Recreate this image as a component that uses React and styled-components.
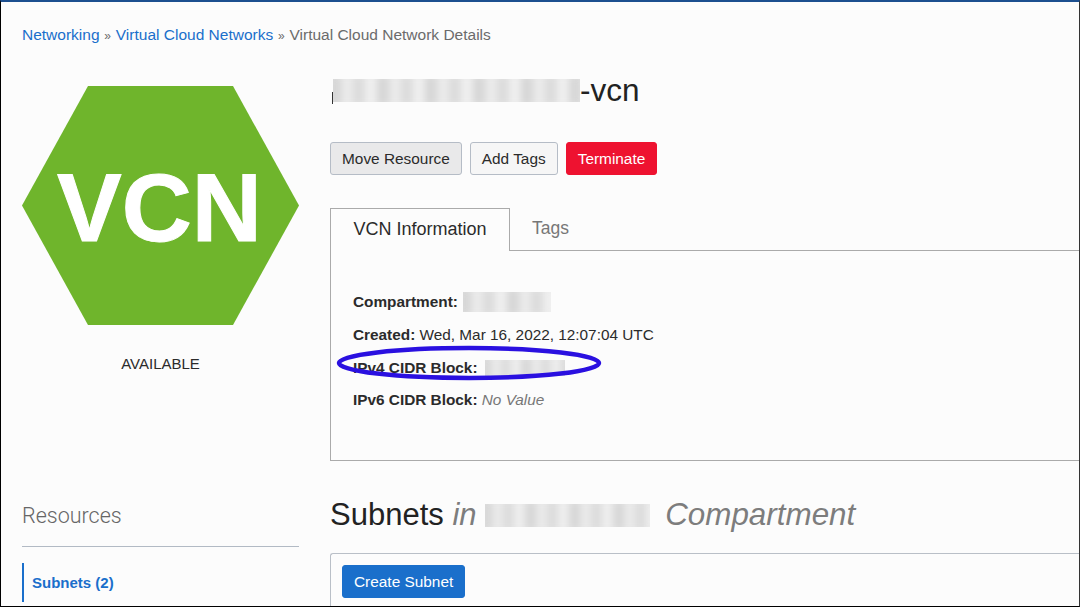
import React from "react";
import styled, { createGlobalStyle } from "styled-components";

const Global = createGlobalStyle`
  html, body { margin: 0; padding: 0; background: #000; }
  body { font-family: "Liberation Sans", Arial, sans-serif; }
`;
const Frame = styled.div`
  width: 1080px; height: 607px; box-sizing: border-box; overflow: hidden;
  background: #fcfcfc; border: 1px solid #000; border-top: 2px solid #1c4f8f;
  border-right-color: #333;
`;
const Page = styled.div`padding: 23px 0 0 21px; color: #2b2b2b;`;
const Crumbs = styled.nav`font-size: 15.5px; line-height: 20px; color: #6b6b6b; margin-bottom: 26px;`;
const Crumb = styled.a`color: #1a6fcb; text-decoration: none;`;
const Sep = styled.span`font-size: 12px; margin: 0 4.8px;`;
const Columns = styled.div`display: flex; align-items: flex-start;`;
const Side = styled.aside`width: 277px; margin-right: 31px; flex: none;`;
const Logo = styled.svg`display: block; width: 277px; height: 240px; margin-top: 14px;`;
const Status = styled.div`text-align: center; font-size: 15px; line-height: 18px; margin-top: 29px; color: #2b2b2b;`;
const ResTitle = styled.h3`
  margin: 131px 0 0; padding-bottom: 18px; border-bottom: 1px solid #b2bac4;
  font-family: Roboto, "Liberation Sans", sans-serif;
  font-size: 21.5px; line-height: 24px; font-weight: 300; color: #666;
`;
const ResItem = styled.div`
  margin-top: 16px; border-left: 2px solid #1a6fcb; padding-left: 8px; height: 39px;
  font-size: 15px; font-weight: 700; line-height: 39px; color: #1a6fcb;
`;
const Main = styled.main`flex: 1; min-width: 0;`;
const Title = styled.h1`
  margin: 0; font-size: 31.5px; line-height: 36px; font-weight: 400; color: #222; display: flex; align-items: center; position: relative;
`;
const Stem = styled.span`
  position: absolute; left: 2px; top: 20px; width: 1px; height: 12px; background: #333;
`;
const Patch = styled.span`
  display: inline-block; position: relative; overflow: hidden; flex: none; vertical-align: middle;
  width: ${p => p.$w}px; height: ${p => p.$h}px; margin-left: ${p => p.$ml || 0}px; background: #e9e9e9;
  &::before {
    content: ""; position: absolute; inset: -4px; filter: blur(4px);
    background: repeating-linear-gradient(90deg, #d4d4d4 0 ${p => p.$s}px, #ececec ${p => p.$s}px ${p => p.$s * 2}px, #dadada ${p => p.$s * 2}px ${p => p.$s * 3}px, #f1f1f1 ${p => p.$s * 3}px ${p => p.$s * 4}px);
  }
`;
const Actions = styled.div`display: flex; gap: 8px; margin-top: 34px;`;
const Btn = styled.button`
  height: 33px; box-sizing: border-box; padding: 0 11px; border-radius: 3px; font: 15.4px "Liberation Sans", Arial, sans-serif;
  border: 1px solid ${p => p.$danger ? "#ee1230" : p.$primary ? "#1a6fcb" : "#b5bcc6"};
  background: ${p => p.$danger ? "#ee1230" : p.$primary ? "#1a6fcb" : p.$muted ? "#e9e9ea" : "#f6f6f6"};
  color: ${p => (p.$danger || p.$primary) ? "#fff" : "#2b2b2b"};
`;
const Tabs = styled.div`display: flex; margin-top: 33px; height: 43px; box-sizing: border-box;`;
const ActiveTab = styled.div`
  box-sizing: border-box; height: 43px; width: 180px; border: 1px solid #aaa; border-bottom: 0; background: #fcfcfc;
  font-size: 18px; line-height: 41px; text-align: center; color: #2b2b2b;
`;
const Tab = styled.div`
  flex: 1; height: 43px; box-sizing: border-box; border-bottom: 1px solid #aaa; padding-left: 22px;
  font-size: 17.5px; line-height: 40px; color: #777;
`;
const Panel = styled.section`
  box-sizing: border-box; height: 210px; border: 1px solid #aaa; border-top: 0; border-right: 0;
  padding: 35px 0 0 22px; font-size: 15.35px;
`;
const Row = styled.div`height: 32.7px; line-height: 32px; display: flex; align-items: center; white-space: pre; position: relative;`;
const Label = styled.b`font-weight: 700; color: #2b2b2b;`;
const NoValue = styled.i`color: #777;`;
const Ring = styled.svg`position: absolute; left: -16px; top: -6px; width: 264px; height: 36px; overflow: visible;`;
const SubHead = styled.h2`
  margin: 34px 0 0; font-size: 31px; line-height: 40px; font-weight: 400; color: #222; display: flex; align-items: center; white-space: pre;
`;
const Em = styled.i`color: #7d7d7d;`;
const TrailEm = styled(Em)`font-size: 31.4px; margin-left: 15px;`;
const Table = styled.div`
  margin-top: 18px; border: 1px solid #b9bfc7; border-right: 0; border-radius: 3px 0 0 0; padding: 11px; height: 80px;
`;

export default function App() {
  return (
    <Frame>
      <Global />
      <Page>
        <Crumbs>
          <Crumb>Networking</Crumb><Sep>»</Sep><Crumb>Virtual Cloud Networks</Crumb><Sep>»</Sep>Virtual Cloud Network Details
        </Crumbs>
        <Columns>
          <Side>
            <Logo viewBox="0 0 277 240">
              <polygon points="0,119.500 66,0 211,0 277,119.500 211,239 66,239" fill="#6fb52c" />
              <text x="137.500" y="154.500" textAnchor="middle" fill="#fff" stroke="#fff" strokeWidth="1" fontFamily="Liberation Sans" fontWeight="700" fontSize="97">VCN</text>
            </Logo>
            <Status>AVAILABLE</Status>
            <ResTitle>Resources</ResTitle>
            <ResItem>Subnets (2)</ResItem>
          </Side>
          <Main>
            <Title><Stem /><Patch $ml={3} $w={247} $h={23} $s={12} />-vcn</Title>
            <Actions>
              <Btn $muted>Move Resource</Btn>
              <Btn>Add Tags</Btn>
              <Btn $danger>Terminate</Btn>
            </Actions>
            <Tabs>
              <ActiveTab>VCN Information</ActiveTab>
              <Tab>Tags</Tab>
            </Tabs>
            <Panel>
              <Row><Label>Compartment: </Label><Patch $ml={1} $w={88} $h={20} $s={12} /></Row>
              <Row><Label>Created: </Label>Wed, Mar 16, 2022, 12:07:04 UTC</Row>
              <Row>
                <Label>IPv4 CIDR Block: </Label><Patch $ml={3} $w={80} $h={16} $s={10} />
                <Ring viewBox="0 0 264 36"><ellipse cx="132" cy="18" rx="130" ry="15" fill="none" stroke="#2a10e0" strokeWidth="4.500" /></Ring>
              </Row>
              <Row><Label>IPv6 CIDR Block: </Label><NoValue>No Value</NoValue></Row>
            </Panel>
            <SubHead>Subnets <Em>in </Em><Patch $w={165} $h={23} $s={11} /><TrailEm>Compartment</TrailEm></SubHead>
            <Table><Btn $primary>Create Subnet</Btn></Table>
          </Main>
        </Columns>
      </Page>
    </Frame>
  );
}
